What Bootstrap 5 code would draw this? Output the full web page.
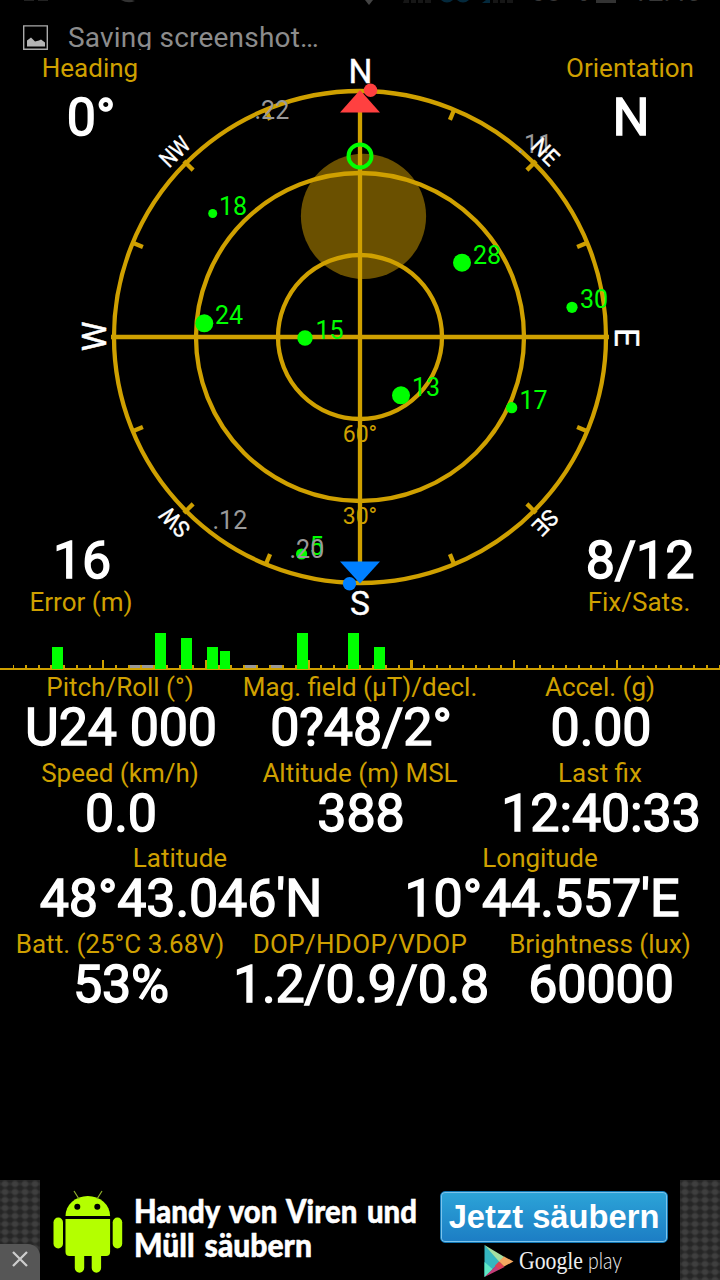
<!DOCTYPE html>
<html lang="en">
<head>
<meta charset="utf-8">
<meta name="viewport" content="width=device-width, initial-scale=1">
<title>GPS status</title>
<link href="https://cdn.jsdelivr.net/npm/bootstrap@5.3.0/dist/css/bootstrap.min.css" rel="stylesheet">
<script src="https://cdn.jsdelivr.net/npm/bootstrap@5.3.0/dist/js/bootstrap.bundle.min.js"></script>
<style>
:root{--gold:#cfa000}
body{background:#000;font-family:Roboto,"Noto Sans",sans-serif;color:#fff;overflow:hidden}
.screen{width:720px;height:1280px}
.notify{height:50px}
.remnants{height:5px;flex:none}
.ticker{height:45px;padding:16px 0 0 23px;gap:20px;font-size:28px;line-height:25px;color:#8c8c8c;letter-spacing:.2px}
.ticker svg{flex:none}
.stage{height:580px;padding:3px 0 13px}
.lbl{font-size:26px;line-height:30px;color:var(--gold);white-space:nowrap}
.val{font-size:52px;line-height:52.2px;-webkit-text-stroke:1.4px #fff;white-space:nowrap;letter-spacing:-.12px;padding-left:2px}
.val-wide{margin:0 -10px;letter-spacing:-.35px}
.spread{letter-spacing:.3px}
.corner-t{width:180px}.corner-t .val{margin-top:9px}
.corner-b{width:162px}
.dial{left:0;top:0}
.signal{height:42px;flex:none}
.readings .row{--bs-gutter-x:0;margin-bottom:3.3px;flex:none}
.ad{height:100px}
.weave{width:40px;background-color:#303030;background-image:radial-gradient(#3f3f3f 30%,transparent 60%),radial-gradient(#262626 30%,transparent 60%);background-size:10px 8px,10px 8px;background-position:0 0,5px 4px}
.shut{height:36px;background:#565656;border-top-right-radius:12px}
.adbtn{width:228px;height:52px;margin-top:11px;border:1px solid #1176b4;border-radius:5px;background:linear-gradient(#2ca4d8,#1c7dc4);box-shadow:inset 0 0 0 1px #7cc4ec;font:bold 32.7px/50px "Liberation Sans",sans-serif;color:#fff;padding:0;white-space:nowrap}
.sat{font-size:25px;fill:#0f0}
.unused{font-size:25px;fill:#999}
.pole{font-size:33.5px;fill:#fff;stroke:#fff;stroke-width:.4;text-anchor:middle}
.inter{font-size:23px;fill:#fff;stroke:#fff;stroke-width:.4;text-anchor:middle}
</style>
</head>
<body>
<main class="screen d-flex flex-column">
  <header class="notify d-flex flex-column overflow-hidden">
    <svg class="remnants" width="720" height="5" viewBox="0 0 720 5">
      <path d="M24 0h10v1H24zM38 0h10v1H38z" fill="#222"/>
      <path d="M121 0q7 4 14 1l-3-1z" fill="#333"/>
      <path d="M365 0h8l-4 5z" fill="#444"/>
      <path d="M404 0h5v3h-6zm7 0h5v3h-5zm7 0h5v3h-5zm7 0h6v3h-6zM493 0h5v3h-5zm7 0h5v3h-5zm7 0h6v3h-6z" fill="#161616"/>
      <path d="M441 0q6 5 12 0zm16 0q6 5 12 0zm25 3l4-3h4v3z" fill="#04293c"/>
      <path d="M596 0h20v3h-20z" fill="#333"/>
      <g font-size="28" fill="#383838"><text x="530" y="1">68 %</text><text x="632" y="1">12:40</text></g>
    </svg>
    <div class="ticker d-flex overflow-hidden">
      <svg class="mt-1" width="25" height="26" viewBox="0 0 25 26"><path d="M.7 .9V24.3H24.3V.9z" fill="none" stroke="#aaa" stroke-width="1.4"/><path d="M4 21.500v-6l4-3 4 4 4-1 2-1 4 3v4z" fill="#b5b5b5"/></svg>
      <span class="pt-1">Saving screenshot…</span>
    </div>
  </header>

  <section class="stage position-relative d-flex flex-column justify-content-between text-center">
    <svg class="dial position-absolute" width="720" height="580" viewBox="0 50 720 580">
      <circle cx="363.5" cy="216.300" r="62.600" fill="#6a5000"/>
      <g fill="none" stroke="#cfa000" stroke-width="4.300">
        <circle cx="360" cy="337" r="246"/><circle cx="360" cy="337" r="164"/><circle cx="360" cy="337" r="82"/>
        <path d="M360 89V585M111 337H609"/>
        <g>
          <path d="M360 91v11" transform="rotate(22.500 360 337)"/><path d="M360 88v13" transform="rotate(45 360 337)"/>
          <path d="M360 91v11" transform="rotate(67.500 360 337)"/><path d="M360 91v11" transform="rotate(112.500 360 337)"/>
          <path d="M360 88v13" transform="rotate(135 360 337)"/><path d="M360 91v11" transform="rotate(157.500 360 337)"/>
          <path d="M360 91v11" transform="rotate(202.500 360 337)"/><path d="M360 88v13" transform="rotate(225 360 337)"/>
          <path d="M360 91v11" transform="rotate(247.500 360 337)"/><path d="M360 91v11" transform="rotate(292.500 360 337)"/>
          <path d="M360 88v13" transform="rotate(315 360 337)"/><path d="M360 91v11" transform="rotate(337.500 360 337)"/>
        </g>
      </g>
      <g font-size="23" fill="#cfa000" text-anchor="middle"><text x="360" y="442">60°</text><text x="360" y="524">30°</text></g>
      <path d="M360 90l20 22.500h-40z" fill="#ff4040"/><circle cx="370.500" cy="90.300" r="6.700" fill="#ff4040"/>
      <path d="M360 583.500l20-22h-40z" fill="#0080ff"/><circle cx="349.500" cy="583.800" r="6.700" fill="#0080ff"/>
      <circle cx="360" cy="156" r="11.500" fill="none" stroke="#0f0" stroke-width="4"/>
      <g fill="#0f0">
        <circle cx="212.700" cy="213.500" r="4.500"/><circle cx="204.300" cy="323.300" r="9"/><circle cx="305" cy="338" r="7.700"/>
        <circle cx="462" cy="262.700" r="9"/><circle cx="572" cy="307.300" r="5.600"/><circle cx="401" cy="395.300" r="9"/>
        <circle cx="511.700" cy="407.700" r="5.600"/><circle cx="301.600" cy="554" r="5.600"/>
      </g>
      <g class="sat">
        <text x="219" y="214.500">18</text><text x="215" y="323.500">24</text><text x="315.500" y="338.500">15</text><text x="473" y="263.500">28</text>
        <text x="580" y="307.500">30</text><text x="412" y="395.500">13</text><text x="519.500" y="408.500">17</text><text x="309.500" y="555">5</text>
      </g>
      <g class="unused">
        <text x="254.500" y="118.500">.22</text><text x="517.500" y="153">.11</text><text x="212.500" y="528.500">.12</text><text x="289.500" y="557.500">.20</text>
      </g>
      <g class="pole">
        <text x="360.500" y="83">N</text><text x="360" y="614.500">S</text>
        <text transform="translate(105.500 336.500) rotate(-90)">W</text><text transform="translate(614.500 337.500) rotate(90)">E</text>
      </g>
      <g class="inter">
        <text x="360" y="83" textLength="32" lengthAdjust="spacingAndGlyphs" transform="rotate(-45 360 337)">NW</text><text x="360" y="83" textLength="28" lengthAdjust="spacingAndGlyphs" transform="rotate(45 360 337)">NE</text>
        <text x="360" y="83" textLength="26" lengthAdjust="spacingAndGlyphs" transform="rotate(135 360 337)">SE</text><text x="360" y="83" textLength="32" lengthAdjust="spacingAndGlyphs" transform="rotate(-135 360 337)">SW</text>
      </g>
    </svg>
    <div class="d-flex justify-content-between">
      <div class="corner-t"><div class="lbl">Heading</div><div class="val">0°</div></div>
      <div class="corner-t"><div class="lbl">Orientation</div><div class="val">N</div></div>
    </div>
    <div class="d-flex justify-content-between">
      <div class="corner-b"><div class="val">16</div><div class="lbl">Error (m)</div></div>
      <div class="corner-b"><div class="val">8/12</div><div class="lbl">Fix/Sats.</div></div>
    </div>
  </section>

  <svg class="signal" width="720" height="42" viewBox="0 630 720 42" shape-rendering="crispEdges">
    <path d="M0 669H720" stroke="#cfa000" stroke-width="2"/>
    <path d="M12.860 666.500H720" stroke="#cfa000" stroke-width="3" stroke-dasharray="2 10.857" stroke-dashoffset="1"/>
    <path d="M102 660h2v8h-2zM205 660h2v8h-2zM308 660h2v8h-2zM410 660h3v8h-3zM513 660h2v8h-2zM616 660h2v8h-2z" fill="#cfa000"/>
    <path d="M130 665h10v3h-10zM245 665h11v3h-11zM271 665h11v3h-11zM142 665h11v3h-11z" fill="#999"/>
    <path d="M52 647h11v22H52zM155 633h11v36h-11zM181 638h11v31h-11zM207 647h11v22h-11zM220 651h10v18h-10zM297 633h11v36h-11zM348 633h11v36h-11zM374 647h11v22h-11z" fill="#0f0"/>
  </svg>

  <section class="readings d-flex flex-column text-center">
    <div class="row">
      <div class="col-4"><div class="lbl">Pitch/Roll (°)</div><div class="val">U24 000</div></div>
      <div class="col-4"><div class="lbl">Mag. field (µT)/decl.</div><div class="val">0?48/2°</div></div>
      <div class="col-4"><div class="lbl">Accel. (g)</div><div class="val">0.00</div></div>
    </div>
    <div class="row">
      <div class="col-4"><div class="lbl">Speed (km/h)</div><div class="val">0.0</div></div>
      <div class="col-4"><div class="lbl">Altitude (m) MSL</div><div class="val">388</div></div>
      <div class="col-4"><div class="lbl">Last fix</div><div class="val">12:40:33</div></div>
    </div>
    <div class="row">
      <div class="col-6"><div class="lbl">Latitude</div><div class="val">48°43.046'N</div></div>
      <div class="col-6"><div class="lbl">Longitude</div><div class="val ps-1">10°44.557'E</div></div>
    </div>
    <div class="row">
      <div class="col-4"><div class="lbl">Batt. (25°C 3.68V)</div><div class="val">53%</div></div>
      <div class="col-4"><div class="lbl spread">DOP/HDOP/VDOP</div><div class="val val-wide">1.2/0.9/0.8</div></div>
      <div class="col-4"><div class="lbl">Brightness (lux)</div><div class="val">60000</div></div>
    </div>
  </section>

  <footer class="ad d-flex mt-auto">
    <div class="weave d-flex flex-column justify-content-end">
      <div class="shut d-flex align-items-center justify-content-center">
        <svg width="18" height="22" viewBox="0 0 18 22"><path d="M2 1l14 14M16 1L2 15" stroke="#ccc" stroke-width="2.300"/></svg>
      </div>
    </div>
    <svg width="400" height="100" viewBox="40 1180 400 100">
      <g fill="#b4ff00">
        <path d="M65.500 1216a22.300 20 0 0 1 44.600 0z"/>
        <path d="M79 1199l-5-8M97 1199l5-8" stroke="#8fae2b" stroke-width="1.200"/>
        <path d="M65.500 1219h44.600v33q0 4-4 4h-5v12a4.600 4.600 0 0 1-9.400 0v-12h-7.500v12a4.600 4.600 0 0 1-9.400 0v-12h-5.300q-4 0-4-4z"/>
        <rect x="53.500" y="1217.500" width="9.500" height="31" rx="4.700"/><rect x="112.700" y="1217.500" width="9.500" height="31" rx="4.700"/>
      </g>
      <circle cx="77.300" cy="1206.700" r="3"/><circle cx="97.300" cy="1206.700" r="3"/>
      <g fill="#fff" stroke="#fff" stroke-width=".5" font-family="Lato" font-weight="900" font-size="32" word-spacing="3">
        <text x="134" y="1223" textLength="283" lengthAdjust="spacingAndGlyphs">Handy von Viren und</text>
        <text x="134" y="1257" textLength="178" lengthAdjust="spacingAndGlyphs">Müll säubern</text>
      </g>
    </svg>
    <div class="d-flex flex-column flex-grow-1">
      <button type="button" class="btn adbtn">Jetzt säubern</button>
      <svg width="228" height="37" viewBox="440 1243 228 37">
        <path d="M484.500 1245v32l17-16z" fill="#35b6c0"/><path d="M484.500 1245l20 12-5 5z" fill="#a5dfa0"/>
        <path d="M484.500 1277l15-15 5 5z" fill="#c43d78"/><path d="M484.500 1262l8 7-8 8z" fill="#5fe8c4"/>
        <path d="M504 1256.500l9.500 5-9.500 5-5-5z" fill="#f5a860"/><path d="M499 1261.500l5 5-5 3-4-4z" fill="#dd4050"/>
        <g fill="#eee"><text x="519" y="1269" font-family="Liberation Serif" font-size="25" textLength="64" lengthAdjust="spacingAndGlyphs">Google</text>
        <text x="588" y="1269" font-family="Lato" font-weight="300" font-size="23" textLength="34" lengthAdjust="spacingAndGlyphs">play</text></g>
      </svg>
    </div>
    <div class="weave"></div>
  </footer>
</main>
</body>
</html>
